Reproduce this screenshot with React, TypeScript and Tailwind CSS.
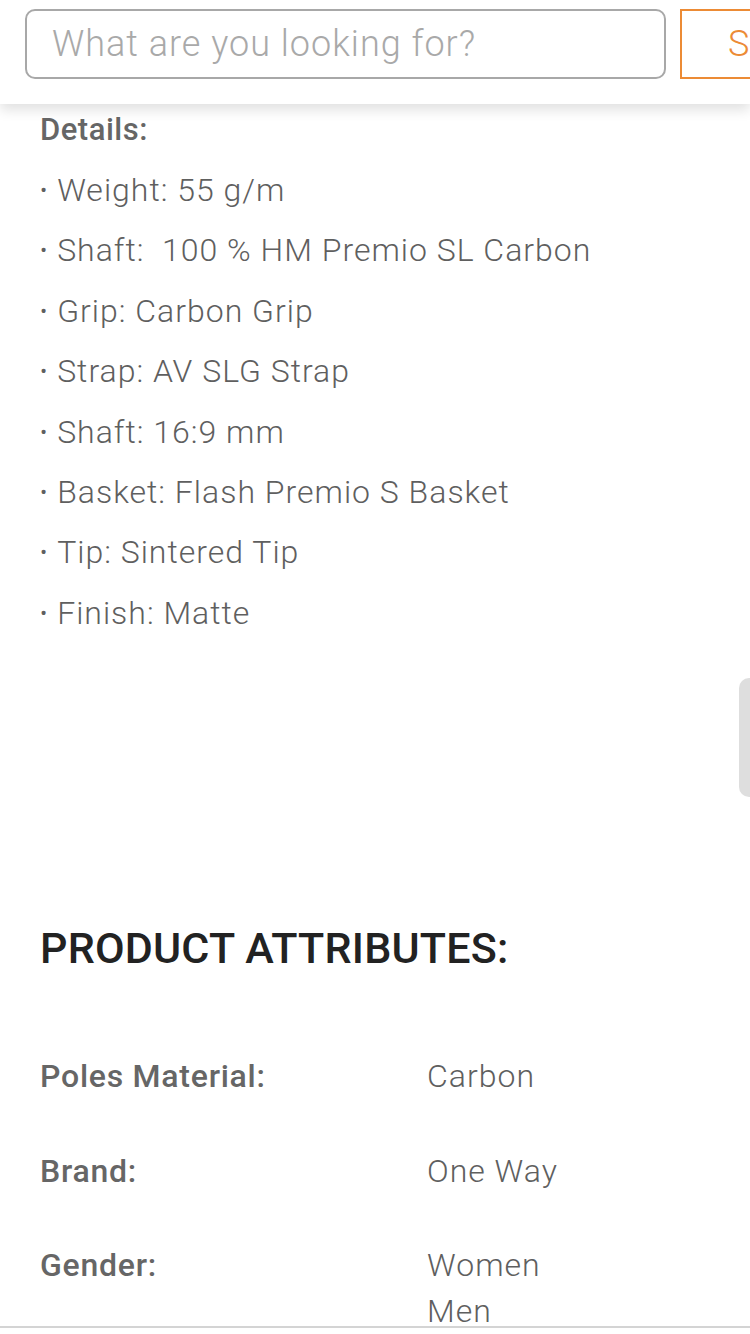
const details = [
  "Weight: 55 g/m",
  "Shaft:\u00a0 100 % HM Premio SL Carbon",
  "Grip: Carbon Grip",
  "Strap: AV SLG Strap",
  "Shaft: 16:9 mm",
  "Basket: Flash Premio S Basket",
  "Tip: Sintered Tip",
  "Finish: Matte",
];

const attributes = [
  { label: "Poles Material:", values: ["Carbon"] },
  { label: "Brand:", values: ["One Way"] },
  { label: "Gender:", values: ["Women", "Men"] },
];

export default function App() {
  return (
    <div className="relative w-[750px] h-[1334px] overflow-hidden bg-white font-['Roboto',sans-serif]">
      {/* Search header */}
      <header className="relative z-10 flex h-[104px] items-start gap-[14px] bg-white pl-[25px] pt-[9px] shadow-[0_6px_12px_rgba(0,0,0,0.12)]">
        <div className="flex h-[70px] w-[641px] shrink-0 items-center rounded-[10px] border-2 border-[#a8a8a8] pl-[25px]">
          <span className="text-[36px] font-light tracking-[1px] text-[#a9a9a9]">What are you looking for?</span>
        </div>
        <div className="flex h-[70px] w-[140px] shrink-0 items-center border-2 border-[#ec8b35] pl-[46px]">
          <span className="text-[36px] font-light tracking-[1px] text-[#ec8b35]">Search</span>
        </div>
      </header>

      <main className="pl-[40px]">
        {/* Details */}
        <p className="text-[31px] leading-[52px] font-medium tracking-[0.5px] text-[#666]">Details:</p>
        <ul className="pt-[4px]">
          {details.map((d, i) => (
            <li key={i} className="h-[60.4px] text-[32px] leading-[60.4px] font-light tracking-[1px] text-[#5f5f5f]">
              <span className="relative -top-[3px] mr-[9px] text-[22px] leading-none">•</span>
              {d}
            </li>
          ))}
        </ul>

        <h2 className="mt-[280px] text-[43px] leading-[50px] font-medium tracking-[0.2px] text-[#222]">
          PRODUCT ATTRIBUTES:
        </h2>

        <div className="mt-[80px] flex flex-col gap-[48.5px]">
          {attributes.map((a) => (
            <div key={a.label} className="flex">
              <span className="w-[387px] shrink-0 text-[32px] leading-[46px] font-medium tracking-[0.75px] text-[#666]">
                {a.label}
              </span>
              <div className="flex flex-col">
                {a.values.map((v) => (
                  <span key={v} className="text-[32px] leading-[46px] font-light tracking-[1px] text-[#5f5f5f]">
                    {v}
                  </span>
                ))}
              </div>
            </div>
          ))}
        </div>
      </main>

      {/* scroll handle */}
      <div className="absolute right-0 top-[678px] h-[119px] w-[11px] rounded-l-[10px] bg-[#dedede]" />

      {/* bottom bar */}
      <div className="absolute left-0 right-0 top-[1326px] h-[8px] border-t-2 border-[#d4d4d4] bg-white" />
    </div>
  );
}
